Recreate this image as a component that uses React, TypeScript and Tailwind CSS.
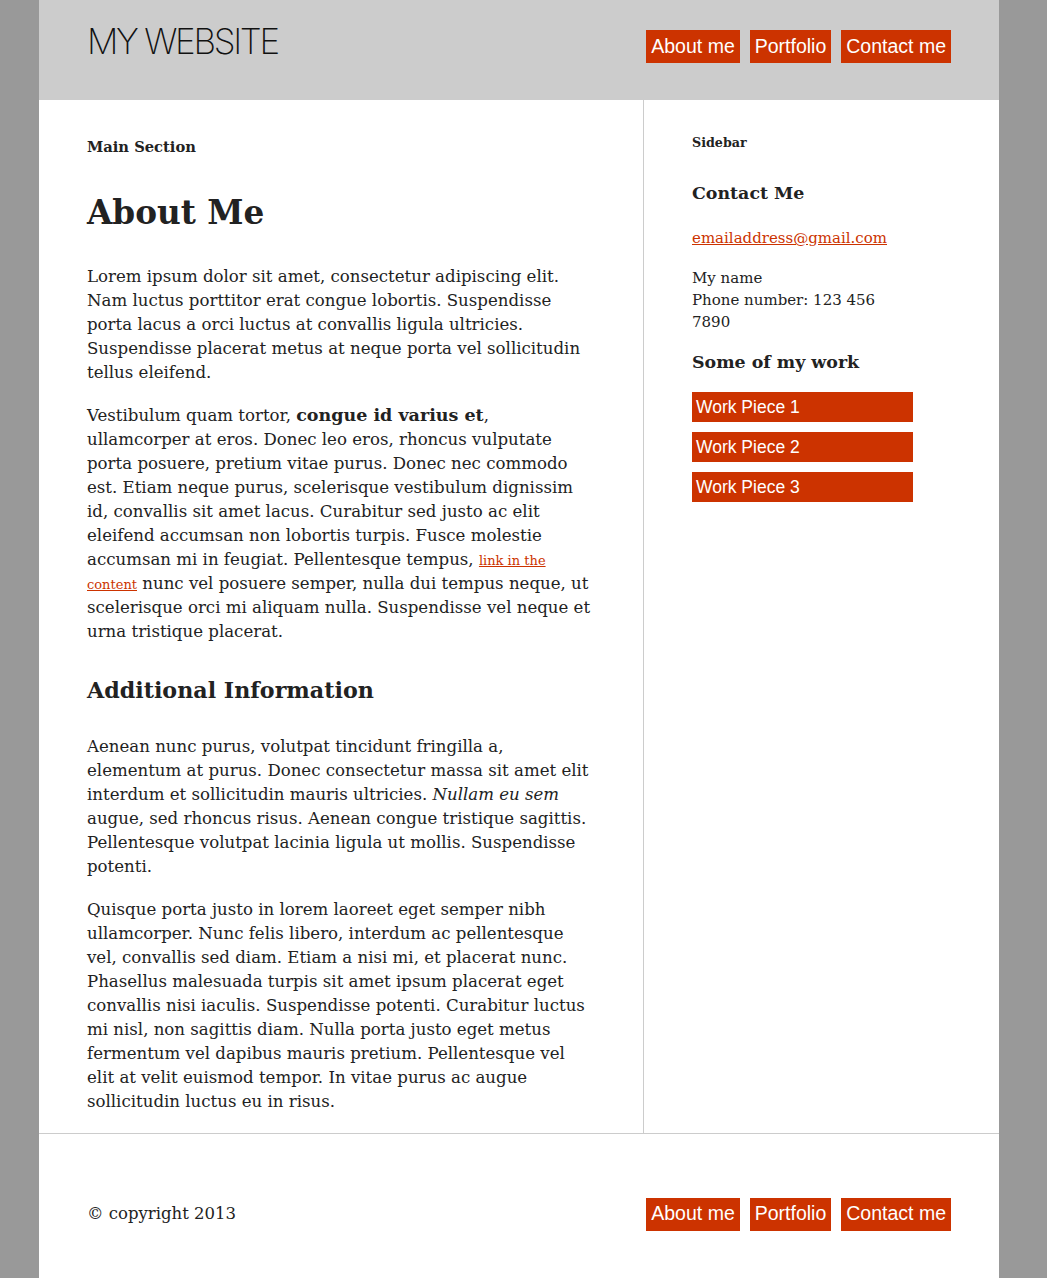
const navItems = ['About me', 'Portfolio', 'Contact me'];

function Nav() {
  return (
    <nav className="flex gap-[10px]">
      {navItems.map((item) => (
        <a
          key={item}
          href="#"
          className="bg-[#cc3300] px-[5px] h-[33px] flex items-center text-[19.5px] text-white font-['Liberation_Sans',Arial,sans-serif]"
        >
          {item}
        </a>
      ))}
    </nav>
  );
}

export default function App() {
  return (
    <div className="min-h-screen bg-[#999999] font-['DejaVu_Serif',Georgia,serif] text-[#222]">
      <div className="ml-[39px] w-[960px] bg-white">
        {/* Header */}
        <header className="h-[100px] bg-[#cccccc] flex items-start justify-between px-[48px]">
          <h1 className="mt-[24px] text-[35px] leading-[35px] font-extralight tracking-[-2.3px] text-[#111] font-['Inter',sans-serif]">
            MY WEBSITE
          </h1>
          <div className="mt-[30px]">
            <Nav />
          </div>
        </header>

        {/* Content */}
        <div className="flex border-b border-[#cccccc]">
          <main className="w-[605px] border-r border-[#cccccc] pl-[48px] pr-[51px] pt-[37px] pb-[19px]">
            <h3 className="text-[14.7px] leading-[20px] font-bold">Main Section</h3>
            <h2 className="mt-[34px] text-[32.7px] leading-[44px] font-bold">About Me</h2>
            <div className="mt-[30px] text-[16.6px] leading-[24px] space-y-[19px]">
              <p>
                Lorem ipsum dolor sit amet, consectetur adipiscing elit. Nam luctus porttitor erat congue lobortis.
                Suspendisse porta lacus a orci luctus at convallis ligula ultricies. Suspendisse placerat metus at neque
                porta vel sollicitudin tellus eleifend.
              </p>
              <p>
                Vestibulum quam tortor, <strong className="text-[17.5px] leading-none">congue id varius et</strong>,
                ullamcorper at eros. Donec leo eros, rhoncus vulputate porta posuere, pretium vitae purus. Donec nec
                commodo est. Etiam neque purus, scelerisque vestibulum dignissim id, convallis sit amet lacus. Curabitur
                sed justo ac elit eleifend accumsan non lobortis turpis. Fusce molestie accumsan mi in feugiat.
                Pellentesque tempus,{' '}
                <a href="#" className="text-[13px] leading-none text-[#cc3300] underline">
                  link in the content
                </a>{' '}
                nunc vel posuere semper, nulla dui tempus neque, ut scelerisque orci mi aliquam nulla. Suspendisse vel
                neque et urna tristique placerat.
              </p>
            </div>
            <h2 className="mt-[30px] text-[22.2px] leading-[32px] font-bold">Additional Information</h2>
            <div className="mt-[29px] text-[16.6px] leading-[24px] space-y-[19px]">
              <p>
                Aenean nunc purus, volutpat tincidunt fringilla a, elementum at purus. Donec consectetur massa sit amet
                elit interdum et sollicitudin mauris ultricies. <em>Nullam eu sem</em> augue, sed rhoncus risus. Aenean
                congue tristique sagittis. Pellentesque volutpat lacinia ligula ut mollis. Suspendisse potenti.
              </p>
              <p>
                Quisque porta justo in lorem laoreet eget semper nibh ullamcorper. Nunc felis libero, interdum ac
                pellentesque vel, convallis sed diam. Etiam a nisi mi, et placerat nunc. Phasellus malesuada turpis sit
                amet ipsum placerat eget convallis nisi iaculis. Suspendisse potenti. Curabitur luctus mi nisl, non
                sagittis diam. Nulla porta justo eget metus fermentum vel dapibus mauris pretium. Pellentesque vel elit
                at velit euismod tempor. In vitae purus ac augue sollicitudin luctus eu in risus.
              </p>
            </div>
          </main>

          <aside className="flex-1 pl-[48px] pt-[34px]">
            <div className="w-[221px]">
              <h3 className="text-[12.7px] leading-[18px] font-bold">Sidebar</h3>
              <h2 className="mt-[29px] text-[17.4px] leading-[24px] font-bold">Contact Me</h2>
              <a href="#" className="block mt-[22px] text-[15px] leading-[22px] text-[#cc3300] underline">
                emailaddress@gmail.com
              </a>
              <p className="mt-[18px] text-[15px] leading-[22px] w-[200px]">
                My name
                <br />
                Phone number: 123 456 7890
              </p>
              <h2 className="mt-[16px] text-[17.4px] leading-[26px] font-bold">Some of my work</h2>
              <ul className="mt-[17px] flex flex-col gap-[10px]">
                {['Work Piece 1', 'Work Piece 2', 'Work Piece 3'].map((w) => (
                  <li key={w}>
                    <a
                      href="#"
                      className="flex items-center h-[30px] px-[4px] bg-[#cc3300] text-white text-[17.5px] font-['Liberation_Sans',Arial,sans-serif]"
                    >
                      {w}
                    </a>
                  </li>
                ))}
              </ul>
            </div>
          </aside>
        </div>

        {/* Footer */}
        <footer className="h-[160px] flex items-center justify-between px-[48px]">
          <p className="text-[16.5px]">© copyright 2013</p>
          <Nav />
        </footer>
      </div>
    </div>
  );
}
